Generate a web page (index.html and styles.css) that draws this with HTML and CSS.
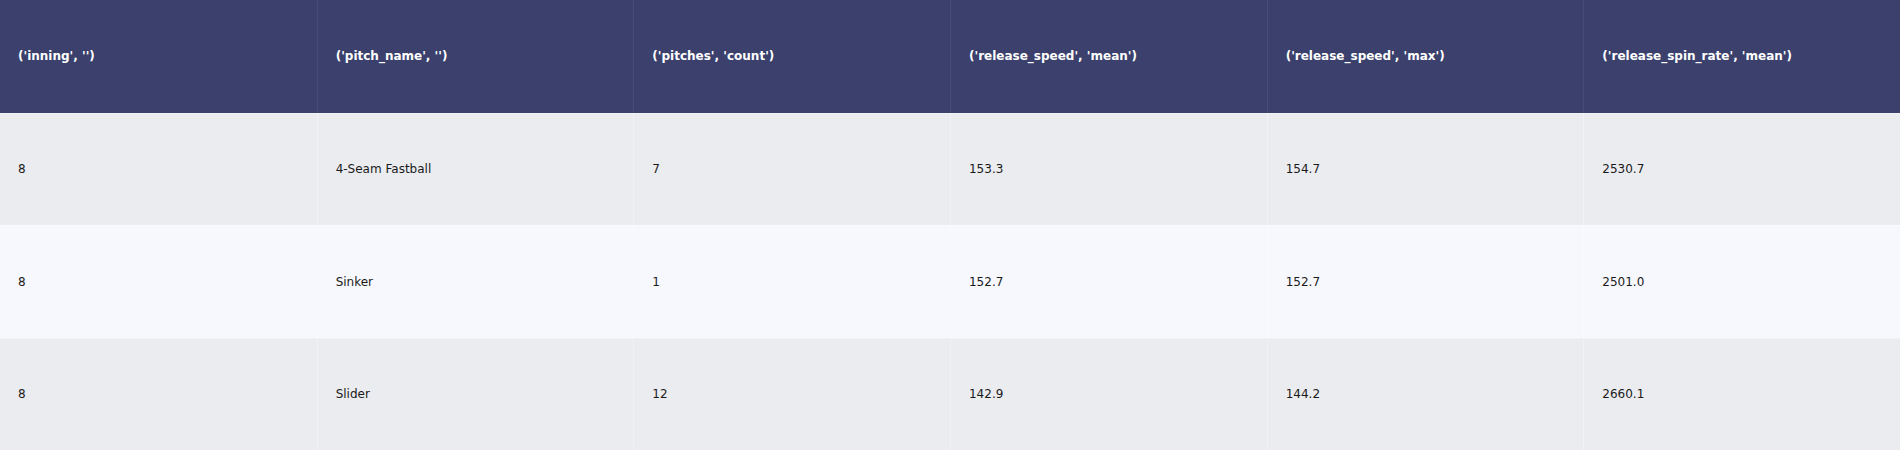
FILE: index.html
```html
<!DOCTYPE html>
<html>
<head>
<meta charset="utf-8">
<link rel="stylesheet" href="styles.css">
</head>
<body>
<div class="table">
  <div class="row head">
    <div class="cell">('inning', '')</div>
    <div class="cell">('pitch_name', '')</div>
    <div class="cell">('pitches', 'count')</div>
    <div class="cell">('release_speed', 'mean')</div>
    <div class="cell">('release_speed', 'max')</div>
    <div class="cell">('release_spin_rate', 'mean')</div>
  </div>
  <div class="row odd">
    <div class="cell">8</div>
    <div class="cell">4-Seam Fastball</div>
    <div class="cell">7</div>
    <div class="cell">153.3</div>
    <div class="cell">154.7</div>
    <div class="cell">2530.7</div>
  </div>
  <div class="row even">
    <div class="cell">8</div>
    <div class="cell">Sinker</div>
    <div class="cell">1</div>
    <div class="cell">152.7</div>
    <div class="cell">152.7</div>
    <div class="cell">2501.0</div>
  </div>
  <div class="row odd">
    <div class="cell">8</div>
    <div class="cell">Slider</div>
    <div class="cell">12</div>
    <div class="cell">142.9</div>
    <div class="cell">144.2</div>
    <div class="cell">2660.1</div>
  </div>
</div>
</body>
</html>
```
FILE: styles.css
```css
html, body {
  margin: 0;
  padding: 0;
  width: 1900px;
  height: 450px;
  overflow: hidden;
  background: #ffffff;
}
.table {
  display: grid;
  grid-template-rows: repeat(4, 112.5px);
  width: 1900px;
  font-family: "DejaVu Sans", Verdana, sans-serif;
  font-size: 12px;
}
.row {
  display: grid;
  grid-template-columns: repeat(6, 1fr);
}
.cell {
  display: flex;
  align-items: center;
  padding-left: 18px;
  border-left: 1px solid rgba(255, 255, 255, 0.35);
  border-top: 1px solid rgba(255, 255, 255, 0.35);
  color: #1a1a1a;
  white-space: nowrap;
}
.row .cell:first-child {
  border-left: none;
}
.head .cell {
  border-top: none;
  border-left-color: rgba(255, 255, 255, 0.06);
  color: #ffffff;
  font-weight: bold;
}
.head {
  background: #3b416c;
}
.odd {
  background: #ebecf0;
}
.even {
  background: #f7f8fd;
}
```
